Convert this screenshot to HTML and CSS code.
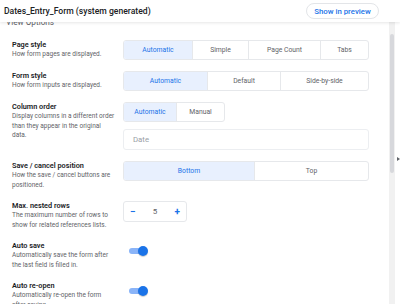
FILE: index.html
```html
<!DOCTYPE html>
<html lang="en">
<head>
    <meta charset="UTF-8">
    <meta name="viewport" content="width=device-width, initial-scale=1.0">
    <title>Dates_Entry_Form - View Options</title>
    <link rel="stylesheet" href="styles.css">
</head>
<body>
    <div class="app">
        <header class="topbar">
            <div class="title">Dates_Entry_Form (system generated)</div>
            <button class="preview-btn">Show in preview</button>
        </header>

        <div class="main">
            <div class="content">
                <h2 class="section-title">View Options</h2>

                <div class="option-row">
                    <div class="option-text">
                        <div class="option-label">Page style</div>
                        <div class="option-desc">How form pages are displayed.</div>
                    </div>
                    <div class="option-control">
                        <div class="segmented seg-page">
                            <span class="seg active">Automatic</span>
                            <span class="seg">Simple</span>
                            <span class="seg">Page Count</span>
                            <span class="seg">Tabs</span>
                        </div>
                    </div>
                </div>

                <div class="option-row">
                    <div class="option-text">
                        <div class="option-label">Form style</div>
                        <div class="option-desc">How form inputs are displayed.</div>
                    </div>
                    <div class="option-control">
                        <div class="segmented seg-form">
                            <span class="seg active">Automatic</span>
                            <span class="seg">Default</span>
                            <span class="seg">Side-by-side</span>
                        </div>
                    </div>
                </div>

                <div class="option-row">
                    <div class="option-text">
                        <div class="option-label">Column order</div>
                        <div class="option-desc">Display columns in a different order than they appear in the original data.</div>
                    </div>
                    <div class="option-control">
                        <div class="segmented seg-order">
                            <span class="seg active">Automatic</span>
                            <span class="seg">Manual</span>
                        </div>
                        <div class="text-input">Date</div>
                    </div>
                </div>

                <div class="option-row">
                    <div class="option-text">
                        <div class="option-label">Save / cancel position</div>
                        <div class="option-desc">How the save / cancel buttons are positioned.</div>
                    </div>
                    <div class="option-control">
                        <div class="segmented seg-save">
                            <span class="seg active">Bottom</span>
                            <span class="seg">Top</span>
                        </div>
                    </div>
                </div>

                <div class="option-row">
                    <div class="option-text">
                        <div class="option-label">Max. nested rows</div>
                        <div class="option-desc">The maximum number of rows to show for related references lists.</div>
                    </div>
                    <div class="option-control">
                        <div class="stepper">
                            <span class="step-btn">&minus;</span>
                            <span class="step-value">5</span>
                            <span class="step-btn">+</span>
                        </div>
                    </div>
                </div>

                <div class="option-row">
                    <div class="option-text">
                        <div class="option-label">Auto save</div>
                        <div class="option-desc">Automatically save the form after the last field is filled in.</div>
                    </div>
                    <div class="option-control">
                        <div class="toggle on"><span class="knob"></span></div>
                    </div>
                </div>

                <div class="option-row">
                    <div class="option-text">
                        <div class="option-label">Auto re-open</div>
                        <div class="option-desc">Automatically re-open the form after saving.</div>
                    </div>
                    <div class="option-control">
                        <div class="toggle on"><span class="knob"></span></div>
                    </div>
                </div>
            </div>

            <div class="scrollbar"><div class="thumb"></div></div>
            <div class="edge"><span class="edge-arrow"></span></div>
        </div>
    </div>
</body>
</html>
```

FILE: styles.css
```css
:root {
    --blue: #1a73e8;
    --blue-light: #8ab4f8;
    --blue-bg: #e8f0fe;
    --text: #202124;
    --muted: #5f6368;
    --border: #e6e8eb;
}

* {
    box-sizing: border-box;
    margin: 0;
    padding: 0;
    font-family: Roboto, 'Noto Sans', sans-serif;
}

body {
    background: #fff;
    width: 400px;
    height: 304px;
    overflow: hidden;
}

.app {
    display: flex;
    flex-direction: column;
    height: 304px;
}

.topbar {
    position: relative;
    z-index: 2;
    height: 22px;
    flex-shrink: 0;
    display: flex;
    align-items: center;
    justify-content: space-between;
    padding: 0 21px 0 4px;
    background: #fff;
    box-shadow: 0 1px 3px rgba(0, 0, 0, 0.1);
}

.title {
    font-size: 8.6px;
    font-weight: 500;
    color: var(--text);
}

.preview-btn {
    width: 73px;
    height: 16px;
    border: 1px solid #e3e5e8;
    border-radius: 8px;
    background: #fff;
    color: var(--blue);
    font-size: 7.8px;
    font-weight: 500;
    text-align: center;
}

.main {
    flex: 1;
    display: flex;
    min-height: 0;
}

.content {
    flex: 1;
    overflow: hidden;
    padding-left: 12px;
    display: flex;
    flex-direction: column;
    gap: 11px;
}

.section-title {
    margin: -5px 0 2px -6px;
    height: 10px;
    font-size: 8.2px;
    font-weight: 400;
    line-height: 10px;
    color: var(--muted);
}

.option-row {
    display: grid;
    grid-template-columns: 104px 246px;
    column-gap: 7px;
    align-items: start;
}

.option-label {
    font-size: 7.3px;
    font-weight: 600;
    line-height: 10px;
    color: var(--text);
}

.option-desc {
    font-size: 6.5px;
    line-height: 9.5px;
    color: var(--muted);
}

.option-control {
    display: flex;
    flex-direction: column;
    align-items: flex-start;
    gap: 7px;
}

.segmented {
    display: grid;
    height: 20px;
    border: 1px solid var(--border);
    border-radius: 3px;
    overflow: hidden;
}

.seg-page { grid-template-columns: 68px 56px 72px 1fr; width: 246px; }
.seg-form { grid-template-columns: 83px 73px 1fr; width: 246px; }
.seg-order { grid-template-columns: 52px 1fr; width: 102px; }
.seg-save { grid-template-columns: 130px 1fr; width: 246px; }

.seg {
    display: flex;
    align-items: center;
    justify-content: center;
    font-size: 6.8px;
    color: var(--muted);
    border-left: 1px solid var(--border);
}

.seg:first-child {
    border-left: none;
}

.seg.active {
    background: var(--blue-bg);
    color: var(--blue);
}

.text-input {
    align-self: stretch;
    height: 21px;
    border: 1px solid #eceef1;
    border-radius: 3px;
    padding-left: 9px;
    display: flex;
    align-items: center;
    font-size: 7.8px;
    color: #9aa0a6;
}

.stepper {
    width: 64px;
    height: 21px;
    border: 1px solid var(--border);
    border-radius: 3px;
    display: flex;
    align-items: center;
    justify-content: space-between;
    padding: 0 6px;
}

.step-btn {
    color: var(--blue);
    font-size: 10px;
    font-weight: 700;
    line-height: 1;
}

.step-value {
    font-size: 8px;
    color: var(--muted);
}

.toggle {
    position: relative;
    margin: 5px 0 0 6px;
    width: 19px;
    height: 10px;
    display: flex;
    align-items: center;
}

.toggle::before {
    content: "";
    width: 16px;
    height: 6px;
    border-radius: 3px;
    background: var(--blue-light);
}

.toggle .knob {
    position: absolute;
    right: 0;
    top: 0;
    width: 10px;
    height: 10px;
    border-radius: 50%;
    background: var(--blue);
    box-shadow: 0 1px 1px rgba(0, 0, 0, 0.2);
}

.scrollbar {
    width: 6px;
    flex-shrink: 0;
    background: #f1f1f1;
    padding: 12px 1px 0 1px;
}

.thumb {
    width: 4px;
    height: 139px;
    border-radius: 2px;
    background: #d7d8dc;
}

.edge {
    width: 5px;
    flex-shrink: 0;
    padding: 135px 0 0 2px;
}

.edge-arrow {
    display: block;
    width: 0;
    height: 0;
    border-left: 3px solid #5f6368;
    border-top: 2.5px solid transparent;
    border-bottom: 2.5px solid transparent;
}
```
